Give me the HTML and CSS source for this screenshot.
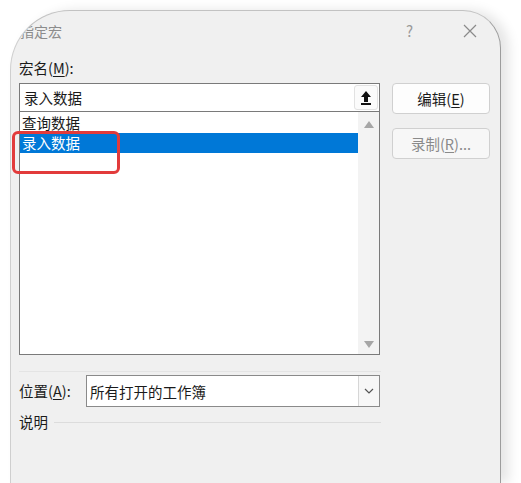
FILE: index.html
```html
<!DOCTYPE html>
<html lang="zh-CN">
<head>
<meta charset="utf-8">
<link rel="stylesheet" href="styles.css">
</head>
<body>
<div class="dialog">
  <div class="titlebar">
    <span class="title">指定宏</span>
    <span class="help">?</span>
    <span class="close">
      <svg width="14" height="14" viewBox="0 0 14 14"><path d="M1 1L13 13M13 1L1 13" stroke="#8a8a8a" stroke-width="1.2" fill="none"/></svg>
    </span>
  </div>
  <div class="content">
    <div class="main">
      <div class="leftcol">
        <div class="label">宏名(<u>M</u>):</div>
        <div class="namebox">
          <span class="nametext">录入数据</span>
          <span class="upbtn">
            <svg width="12" height="16" viewBox="0 0 12 16"><path d="M6 1L11 7H8V12H4V7H1Z" fill="#111"/><rect x="1" y="13" width="10" height="2" fill="#111"/></svg>
          </span>
        </div>
        <div class="listbox">
          <div class="items">
            <div class="item first">查询数据</div>
            <div class="item selected">录入数据</div>
          </div>
          <div class="scrollbar">
            <svg class="arrow" width="10" height="7" viewBox="0 0 10 7"><path d="M0 7L5 0L10 7Z" fill="#a6a6a6"/></svg>
            <svg class="arrow" width="10" height="7" viewBox="0 0 10 7"><path d="M0 0L5 7L10 0Z" fill="#a6a6a6"/></svg>
          </div>
        </div>
      </div>
      <div class="rightcol">
        <div class="btn">编辑(<u>E</u>)</div>
        <div class="btn disabled">录制(<u>R</u>)...</div>
      </div>
    </div>
    <div class="sepline"></div>
    <div class="locrow">
      <div class="loclabel">位置(<u>A</u>):</div>
      <div class="combo">
        <span class="combotext">所有打开的工作簿</span>
        <span class="dropbtn">
          <svg width="10" height="6" viewBox="0 0 10 6"><path d="M1 1L5 5L9 1" stroke="#555" stroke-width="1.2" fill="none"/></svg>
        </span>
      </div>
    </div>
    <div class="descrow">
      <span class="desclabel">说明</span>
      <span class="descline"></span>
    </div>
  </div>
  <div class="redmark"></div>
</div>
</body>
</html>
```
FILE: styles.css
```css
html, body {
  margin: 0;
  padding: 0;
  background: #ffffff;
  width: 521px;
  height: 483px;
  overflow: hidden;
  font-family: "Noto Sans CJK SC", "Noto Sans", sans-serif;
}
.dialog {
  position: relative;
  margin: 10px 0 0 10px;
  width: 489px;
  height: 472px;
  overflow: hidden;
  background: #f0f0f0;
  border-left: 1px solid #cfcfcf;
  border-right: 1px solid #9c9c9c;
  border-top: 1px solid #c2c2c2;
  border-radius: 60px 38px 0 0;
  box-shadow: 8px 0 12px rgba(0,0,0,0.10);
  color: #1a1a1a;
}
.titlebar {
  height: 39px;
  display: flex;
  align-items: center;
  font-size: 15px;
}
.title {
  margin-left: 9px;
  color: #8c8c8c;
  font-size: 14px;
}
.help {
  margin-left: auto;
  color: #9a9a9a;
  font-size: 15px;
  margin-right: 50px;
}
.close {
  display: flex;
  margin-right: 23px;
}
.content {
  padding: 0 0 0 8px;
}
.main {
  display: flex;
  gap: 12px;
}
.leftcol {
  width: 361px;
}
.label, .loclabel, .desclabel {
  font-size: 14.5px;
  line-height: 20px;
}
.label {
  margin-top: 8px;
  margin-bottom: 5px;
}
u { text-decoration-thickness: 1px; text-underline-offset: 2px; }
.namebox {
  background: #fff;
  border: 1px solid #7a7a7a;
  display: flex;
  align-items: center;
  box-sizing: border-box;
  height: 29px;
}
.nametext {
  font-size: 14.5px;
  padding-left: 4px;
  flex: 1;
}
.upbtn {
  width: 24px;
  height: 25px;
  margin-right: 1px;
  background: #fbfbfb;
  border: 1px solid #e2e2e2;
  border-radius: 3px;
  box-sizing: border-box;
  display: flex;
  align-items: center;
  justify-content: center;
}
.listbox {
  height: 243px;
  box-sizing: border-box;
  border: 1px solid #7a7a7a;
  border-top: none;
  background: #fff;
  display: flex;
}
.items {
  flex: 1;
  overflow: hidden;
  padding-top: 1px;
}
.item {
  height: 20px;
  line-height: 20px;
  font-size: 14.5px;
  padding-left: 2px;
}
.item.selected {
  background: #0078d7;
  color: #fff;
}
.scrollbar {
  width: 21px;
  background: #f3f3f3;
  display: flex;
  flex-direction: column;
  justify-content: space-between;
  align-items: center;
  padding: 9px 0 6px;
  box-sizing: border-box;
}
.rightcol {
  display: flex;
  flex-direction: column;
  gap: 14px;
  margin-top: 33px;
}
.btn {
  width: 98px;
  height: 31px;
  box-sizing: border-box;
  background: #fdfdfd;
  border: 1px solid #d0d0d0;
  border-radius: 4px;
  font-size: 14.5px;
  display: flex;
  align-items: center;
  justify-content: center;
}
.btn.disabled {
  color: #8a8a8a;
  background: #f7f7f7;
}
.sepline {
  width: 362px;
  height: 1px;
  background: #e4e4e4;
  margin-top: 16px;
}
.locrow {
  display: flex;
  align-items: center;
  margin-top: 3px;
}
.loclabel {
  width: 67px;
}
.combo {
  width: 294px;
  height: 32px;
  box-sizing: border-box;
  border: 1px solid #8a8a8a;
  background: #fff;
  display: flex;
  align-items: center;
}
.combotext {
  flex: 1;
  font-size: 14.5px;
  padding-left: 3px;
}
.dropbtn {
  width: 21px;
  height: 30px;
  box-sizing: border-box;
  border-left: 1px solid #d6d6d6;
  background: #f7f7f7;
  display: flex;
  align-items: center;
  justify-content: center;
}
.descrow {
  display: flex;
  align-items: center;
  margin-top: 5px;
  width: 362px;
}
.desclabel {
  margin-right: 6px;
}
.descline {
  flex: 1;
  height: 1px;
  background: #dcdcdc;
}
.redmark {
  position: absolute;
  left: 1px;
  top: 120px;
  width: 108px;
  height: 43px;
  box-sizing: border-box;
  border: 3px solid #e23b3b;
  border-radius: 6px;
}
```
